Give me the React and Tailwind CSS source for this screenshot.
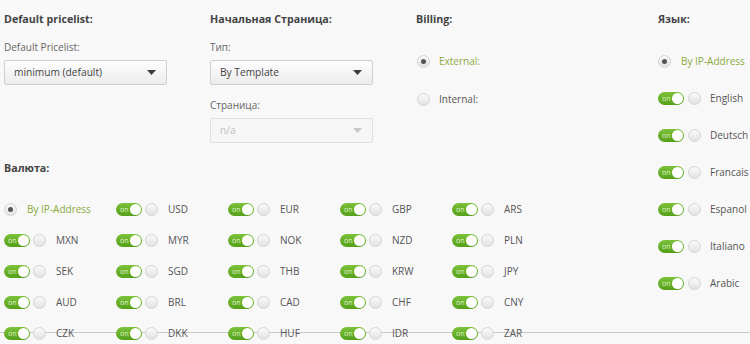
import React from 'react'

const font = { fontFamily: '"Open Sans", "Liberation Sans", sans-serif' }

function Caret({ disabled }) {
  return (
    <svg width="9" height="5" viewBox="0 0 9 5" className="shrink-0">
      <path d="M0 0h9L4.5 5z" fill={disabled ? '#c8c8c8' : '#3a3a3a'} />
    </svg>
  )
}

function Select({ value, disabled }) {
  return (
    <div
      className={
        'h-[25px] w-[163px] flex items-center justify-between pl-[9px] pr-[10px] rounded-[2px] border text-[10.2px] ' +
        (disabled
          ? 'border-[#e0e0e0] bg-[#f6f6f6] text-[#c0c0c0]'
          : 'border-[#cfcfcf] bg-gradient-to-b from-[#fdfdfd] to-[#ececec] text-[#444]')
      }
    >
      <span>{value}</span>
      <Caret disabled={disabled} />
    </div>
  )
}

function Radio({ checked }) {
  return (
    <span className="w-[13px] h-[13px] shrink-0 rounded-full border border-[#d4d4d4] bg-gradient-to-b from-[#fafafa] to-[#e2e2e2] flex items-center justify-center">
      {checked && <span className="w-[5px] h-[5px] rounded-full bg-[#555]" />}
    </span>
  )
}

function Toggle() {
  return (
    <span className="w-[26px] h-[13px] shrink-0 rounded-full bg-gradient-to-b from-[#7cc13a] to-[#56a018] flex items-center justify-between pl-[4px] pr-[1px]">
      <span className="text-[7px] leading-none text-[#dff3c8]">on</span>
      <span className="w-[11px] h-[11px] rounded-full bg-white" />
    </span>
  )
}

function Heading({ children }) {
  return <div className="h-[18px] leading-[18px] text-[10.7px] font-bold text-[#444]">{children}</div>
}

function Label({ children }) {
  return <div className="h-[16px] leading-[16px] text-[10px] text-[#666]">{children}</div>
}

const currencies = [
  null, 'USD', 'EUR', 'GBP', 'ARS',
  'MXN', 'MYR', 'NOK', 'NZD', 'PLN',
  'SEK', 'SGD', 'THB', 'KRW', 'JPY',
  'AUD', 'BRL', 'CAD', 'CHF', 'CNY',
  'CZK', 'DKK', 'HUF', 'IDR', 'ZAR',
]

const languages = ['English', 'Deutsch', 'Francais', 'Espanol', 'Italiano', 'Arabic']

export default function App() {
  return (
    <div className="relative w-[750px] h-[344px] overflow-hidden bg-[#f8f8f8]" style={font}>
      {/* line across the bottom row */}
      <div className="absolute left-0 right-0 top-[332px] h-px bg-[#c8c8c8]" />

      <div className="relative flex pt-[10px] pl-[4px]">
        <div className="w-[653px] flex flex-col">
          <div className="flex">
            {/* Default pricelist */}
            <div className="w-[206px]">
              <Heading>Default pricelist:</Heading>
              <div className="mt-[11px]"><Label>Default Pricelist:</Label></div>
              <div className="mt-[5px]"><Select value="minimum (default)" /></div>
            </div>

            {/* Start page */}
            <div className="w-[206px]">
              <Heading>Начальная Страница:</Heading>
              <div className="mt-[11px]"><Label>Тип:</Label></div>
              <div className="mt-[5px]"><Select value="By Template" /></div>
              <div className="mt-[12px]"><Label>Страница:</Label></div>
              <div className="mt-[5px]"><Select value="n/a" disabled /></div>
            </div>

            {/* Billing */}
            <div className="w-[240px]">
              <Heading>Billing:</Heading>
              <div className="mt-[23px] flex flex-col gap-[18px] pl-[1px]">
                <div className="h-[20px] flex items-center gap-[9px] text-[10px] text-[#8aab3c]">
                  <Radio checked />
                  <span>External:</span>
                </div>
                <div className="h-[20px] flex items-center gap-[9px] text-[10px] text-[#555]">
                  <Radio />
                  <span>Internal:</span>
                </div>
              </div>
            </div>
          </div>

          {/* Currency */}
          <div className="mt-[16px]">
            <Heading>Валюта:</Heading>
            <div className="mt-[17px] grid grid-cols-[repeat(5,112px)]">
              {currencies.map((c, i) =>
                c === null ? (
                  <div key={i} className="h-[31px] flex items-center gap-[10px] text-[10px] text-[#8aab3c]">
                    <Radio checked />
                    <span>By IP-Address</span>
                  </div>
                ) : (
                  <div key={i} className="h-[31px] flex items-center text-[10px] text-[#555]">
                    <Toggle />
                    <span className="ml-[3px]"><Radio /></span>
                    <span className="ml-[10px]">{c}</span>
                  </div>
                )
              )}
            </div>
          </div>
        </div>

        {/* Language */}
        <div className="flex-1 pl-[1px]">
          <Heading>Язык:</Heading>
          <div className="mt-[23px] flex flex-col gap-[17px]">
            <div className="h-[20px] flex items-center gap-[10px] text-[10px] text-[#8aab3c]">
              <Radio checked />
              <span className="whitespace-nowrap">By IP-Address</span>
            </div>
            {languages.map(l => (
              <div key={l} className="h-[20px] flex items-center text-[10px] text-[#555]">
                <Toggle />
                <span className="ml-[4px]"><Radio /></span>
                <span className="ml-[9px]">{l}</span>
              </div>
            ))}
          </div>
        </div>
      </div>
    </div>
  )
}
